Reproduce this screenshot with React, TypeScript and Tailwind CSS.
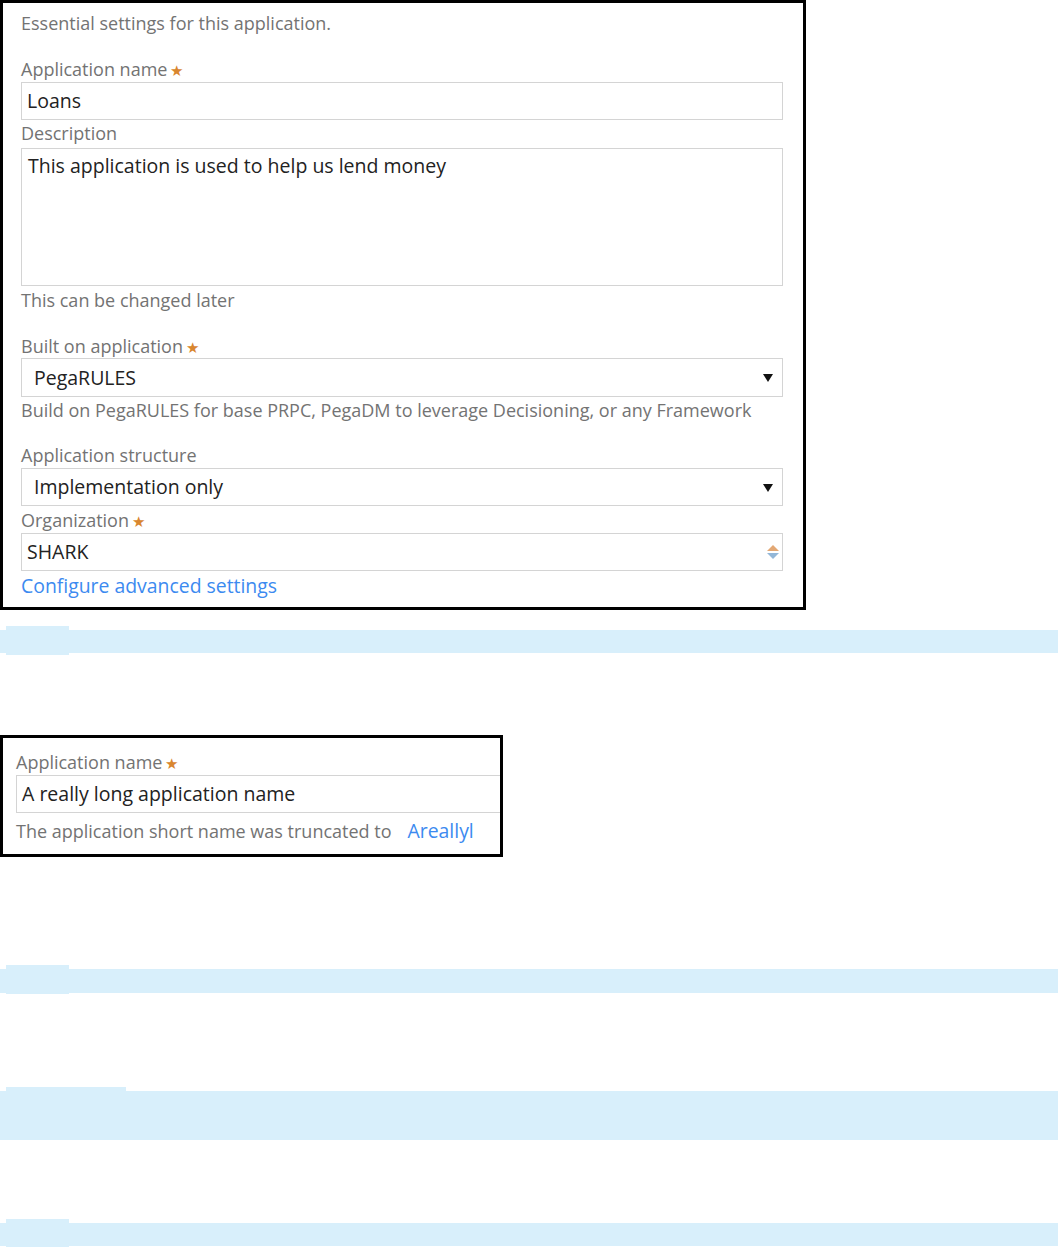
import React from 'react'

const font = { fontFamily: '"Open Sans", "Noto Sans", sans-serif' }

function Star() {
  return <span className="ml-[3px] text-[15px] text-[#d9862f]">★</span>
}

function Label({ text, required, className = '' }: { text: string; required?: boolean; className?: string }) {
  return (
    <div className={`h-[22px] whitespace-nowrap text-[18px] leading-[22px] text-[#737373] ${className}`}>
      {text}
      {required && <Star />}
    </div>
  )
}

function Caret() {
  return (
    <svg width="10" height="9" viewBox="0 0 10 9">
      <path d="M0 1h10L5 9z" fill="#111" />
    </svg>
  )
}

function Spinner() {
  return (
    <div className="flex flex-col items-center gap-[2px]">
      <svg width="12" height="6" viewBox="0 0 12 6">
        <path d="M0 6h12L6 0z" fill="#e3a874" />
      </svg>
      <svg width="12" height="6" viewBox="0 0 12 6">
        <path d="M0 0h12L6 6z" fill="#93b7d8" />
      </svg>
    </div>
  )
}

function Bar({ mt, tabW, tabH, barH }: { mt: string; tabW: string; tabH: string; barH: string }) {
  return (
    <div className={`flex items-start ${mt}`}>
      <div className={`mt-[4px] w-[6px] bg-[#d8effb] ${barH}`} />
      <div className={`bg-[#d8effb] ${tabW} ${tabH}`} />
      <div className={`mt-[4px] flex-1 bg-[#d8effb] ${barH}`} />
    </div>
  )
}

export default function App() {
  return (
    <div className="min-h-screen w-[1058px] bg-white" style={font}>
      {/* main settings box */}
      <div className="h-[610px] w-[806px] border-[3px] border-black pl-[18px] pr-[20px] pt-[9px]">
        <Label text="Essential settings for this application." />

        <Label text="Application name" required className="mt-[24px]" />
        <div className="mt-[2px] flex h-[38px] items-center border border-[#d4d4d4] px-[5px] text-[19.5px] text-[#222]">Loans</div>

        <Label text="Description" className="mt-[2px]" />
        <div className="mt-[4px] h-[138px] border border-[#d4d4d4] px-[6px] pt-[5px] text-[19.5px] leading-[24px] text-[#222]">
          This application is used to help us lend money
        </div>
        <Label text="This can be changed later" className="mt-[3px]" />

        <Label text="Built on application" required className="mt-[24px]" />
        <div className="mt-[1px] flex h-[39px] items-center justify-between border border-[#d4d4d4] pl-[12px] pr-[9px] text-[19.5px] text-[#222]">
          <span>PegaRULES</span>
          <Caret />
        </div>
        <Label text="Build on PegaRULES for base PRPC, PegaDM to leverage Decisioning, or any Framework" className="mt-[2px]" />

        <Label text="Application structure" className="mt-[23px]" />
        <div className="mt-[2px] flex h-[38px] items-center justify-between border border-[#d4d4d4] pl-[12px] pr-[9px] text-[19.5px] text-[#222]">
          <span>Implementation only</span>
          <Caret />
        </div>

        <Label text="Organization" required className="mt-[3px]" />
        <div className="mt-[2px] flex h-[38px] items-center justify-between border border-[#d4d4d4] pl-[5px] pr-[3px] text-[19.5px] text-[#222]">
          <span>SHARK</span>
          <Spinner />
        </div>
        <div className="mt-[4px] h-[22px] text-[19.4px] leading-[22px] text-[#3c8af0]">Configure advanced settings</div>
      </div>

      <Bar mt="mt-[16px]" tabW="w-[63px]" tabH="h-[29px]" barH="h-[23px]" />

      {/* truncated name box */}
      <div className="mt-[80px] h-[122px] w-[503px] overflow-hidden border-[3px] border-black pl-[13px] pt-[13px]">
        <Label text="Application name" required />
        <div className="mt-[2px] flex h-[38px] w-[520px] items-center border border-[#d4d4d4] px-[5px] text-[19.5px] text-[#222]">
          A really long application name
        </div>
        <div className="mt-[7px] flex h-[22px] whitespace-nowrap text-[18px] leading-[22px] text-[#737373]">
          <span>The application short name was truncated to</span>
          <span className="ml-[16px] text-[19.4px] text-[#3c8af0]">Areallyl</span>
        </div>
      </div>

      <Bar mt="mt-[108px]" tabW="w-[63px]" tabH="h-[29px]" barH="h-[24px]" />
      <Bar mt="mt-[93px]" tabW="w-[120px]" tabH="h-[53px]" barH="h-[49px]" />
      <Bar mt="mt-[79px]" tabW="w-[63px]" tabH="h-[29px]" barH="h-[23px]" />
    </div>
  )
}
